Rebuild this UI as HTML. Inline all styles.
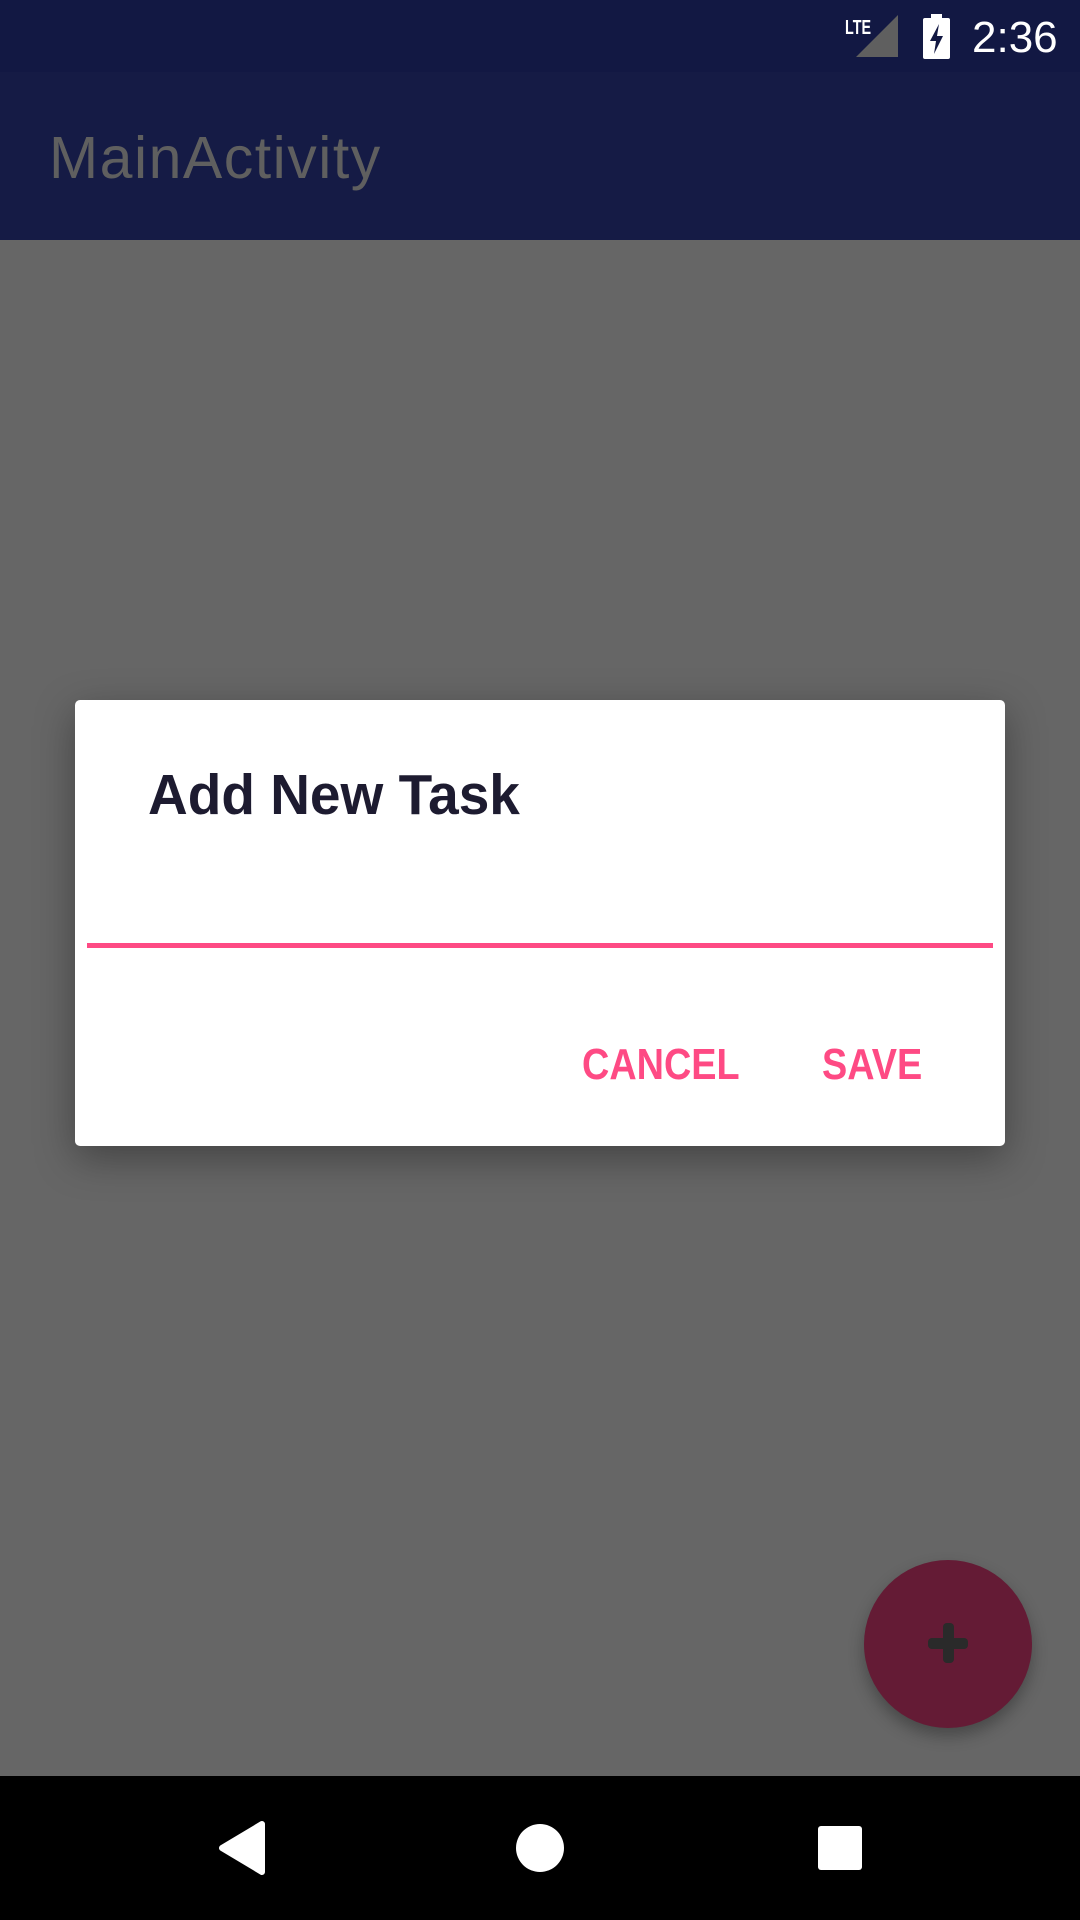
<!DOCTYPE html>
<html><head><meta charset="utf-8"><style>
html,body{margin:0;padding:0;width:1080px;height:1920px;overflow:hidden;background:#666;font-family:"Liberation Sans",sans-serif;position:relative}
.status{position:absolute;left:0;top:0;width:1080px;height:72px;background:#121843}
.bar{position:absolute;left:0;top:72px;width:1080px;height:168px;background:#151b45}
.title{position:absolute;left:49px;top:123px;font-size:59px;color:#5f5f5f;line-height:70px;letter-spacing:1.5px}
.time{position:absolute;left:972px;top:13px;font-size:44px;color:#fff;line-height:50px}
.dlg{position:absolute;left:75px;top:700px;width:930px;height:446px;background:#fff;border-radius:5px;box-shadow:0 12px 40px rgba(0,0,0,.35)}
.dt{position:absolute;left:73px;top:60px;font-size:57px;font-weight:bold;color:#1d1b30;line-height:70px;transform-origin:left center;transform:scaleX(.965)}
.line{position:absolute;left:12px;top:243px;width:906px;height:5px;background:#fe4a84}
.btn{position:absolute;top:340px;font-size:44px;font-weight:bold;color:#fe4a84;line-height:50px;transform-origin:left center;transform:scaleX(.86)}
.nav{position:absolute;left:0;top:1776px;width:1080px;height:144px;background:#000}
.fab{position:absolute;left:864px;top:1560px;width:168px;height:168px;border-radius:50%;background:#641b35;box-shadow:0 8px 16px rgba(0,0,0,.3)}
</style></head><body>
<div class="status"></div>
<div class="bar"></div>
<div class="title">MainActivity</div>
<svg style="position:absolute;left:840px;top:10px" width="120" height="55" viewBox="0 0 120 55">
<text x="5" y="24" font-family="Liberation Sans" font-size="20" font-weight="bold" fill="#fff" textLength="26" lengthAdjust="spacingAndGlyphs">LTE</text>
<polygon points="58,5 58,47 16,47" fill="#5f5f5f"/>
<rect x="83" y="8" width="27" height="41" rx="2" fill="#fff"/>
<rect x="91" y="4" width="11" height="6" fill="#fff"/>
<polygon points="99,14 90,31 96,31 94,44 103,26 97,26" fill="#121843"/>
</svg>
<div class="time">2:36</div>
<div class="dlg">
<div class="dt">Add New Task</div>
<div class="line"></div>
<div class="btn" style="left:507px">CANCEL</div>
<div class="btn" style="left:747px">SAVE</div>
</div>
<div class="fab"></div>
<div style="position:absolute;left:928px;top:1638px;width:40px;height:11px;background:#2a2a2a;border-radius:4px"></div>
<div style="position:absolute;left:943px;top:1623px;width:11px;height:40px;background:#2a2a2a;border-radius:4px"></div>
<div class="nav"></div>
<svg style="position:absolute;left:0;top:1776px" width="1080" height="144">
<polygon points="262,48 262,96 222,72" fill="#fff" stroke="#fff" stroke-width="6" stroke-linejoin="round"/>
<circle cx="540" cy="72" r="24" fill="#fff"/>
<rect x="818" y="50" width="44" height="44" rx="3" fill="#fff"/>
</svg>
</body></html>
